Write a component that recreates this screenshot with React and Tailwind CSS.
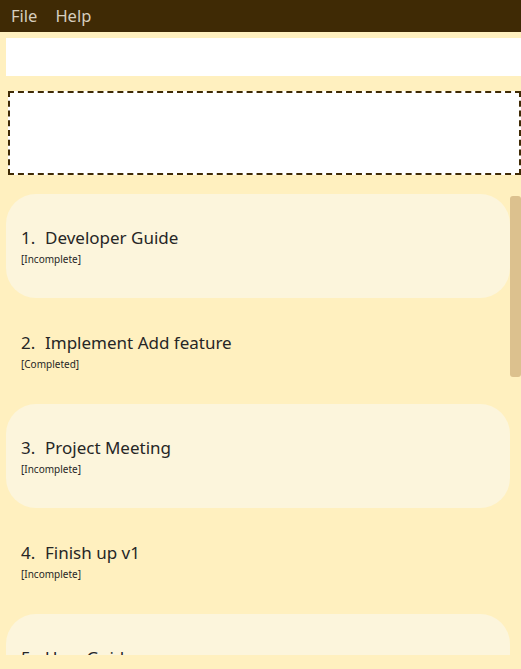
import React from "react";

const tasks = [
  { n: 1, name: "Developer Guide", status: "[Incomplete]" },
  { n: 2, name: "Implement Add feature", status: "[Completed]" },
  { n: 3, name: "Project Meeting", status: "[Incomplete]" },
  { n: 4, name: "Finish up v1", status: "[Incomplete]" },
  { n: 5, name: "User Guide", status: "[Incomplete]" },
];

export default function App() {
  return (
    <div className="w-[521px] h-[669px] bg-[#fff0bf] flex flex-col overflow-hidden" style={{ fontFamily: '"Noto Sans", "Open Sans", sans-serif' }}>
      <div className="h-[32px] bg-[#3f2a05] flex items-center text-[16.5px] text-[#d6cebf] shrink-0">
        <span className="ml-[11px]">File</span>
        <span className="ml-[18px]">Help</span>
      </div>
      <div className="ml-[6px] mt-[6px] h-[38px] bg-white shrink-0"></div>
      <div className="ml-[8px] mt-[15px] h-[84px] bg-white border-2 border-dashed border-[#3f2a05] shrink-0"></div>
      <div className="mt-[19px] h-[461px] max-h-[461px] flex shrink-0 overflow-hidden">
        <div className="flex-1 h-[461px] overflow-hidden pl-[6px]">
          {tasks.map((t) => (
            <div
              key={t.n}
              className={`h-[104px] mb-[1px] pl-[15px] flex flex-col justify-center rounded-[30px] ${t.n % 2 === 1 ? "bg-[#fcf5dc]" : ""}`}
            >
              <div className="text-[17px] leading-[24px] text-[#262626] flex">
                <span className="w-[24px]">{t.n}.</span>
                <span>{t.name}</span>
              </div>
              <div className="text-[10px] leading-[14px] text-[#262626] mt-[2px]">{t.status}</div>
            </div>
          ))}
        </div>
        <div className="w-[11px] pt-[2px]">
          <div className="h-[181px] bg-[#dcc18e] rounded-[3px]"></div>
        </div>
      </div>
    </div>
  );
}
